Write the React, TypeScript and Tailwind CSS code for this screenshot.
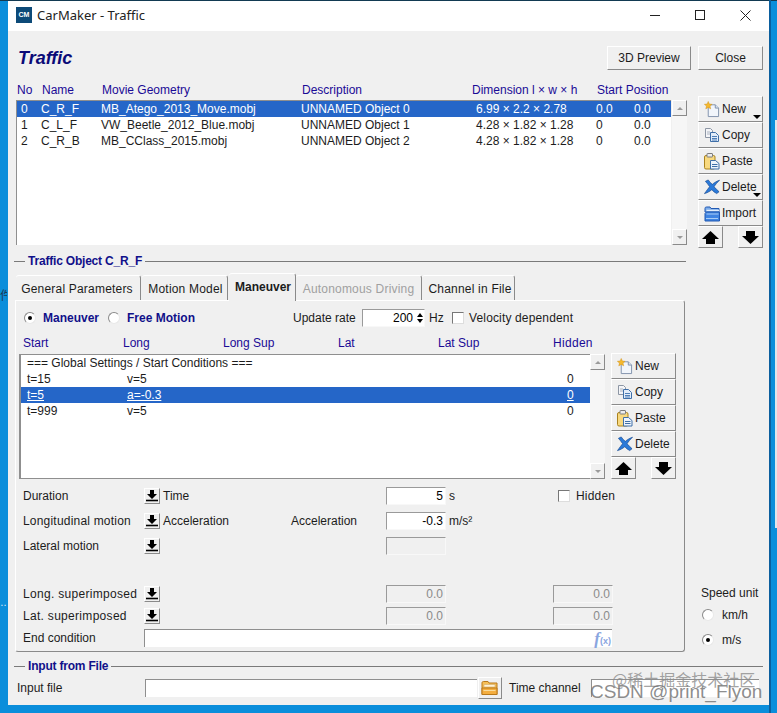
import React from "react";

const raised = "border border-t-white border-l-white border-r-[#8a8a8a] border-b-[#8a8a8a] bg-[#f0f0f0]";
const sunken = "border border-t-[#9a9a9a] border-l-[#9a9a9a] border-r-[#f8f8f8] border-b-[#f8f8f8]";

// toolbar icons
function NewIcon() {
  return (
    <svg width="17" height="17" viewBox="0 0 17 17">
      <path d="M4.500 3.500h7.500l3.500 3.500v9h-11z" fill="#f1f5fb" stroke="#7f90ab" />
      <path d="M12 3.500V7h3.500" fill="#d5e1f1" stroke="#7f90ab" />
      <path d="M4.500 0l1.200 2.700 2.900.3-2.200 1.900.7 2.900-2.600-1.500-2.600 1.500.7-2.900L.4 3l2.900-.3z" fill="#f5b92e" stroke="#d08f17" strokeWidth=".5" />
    </svg>
  );
}

function CopyIcon() {
  return (
    <svg width="16" height="16" viewBox="0 0 16 16">
      <path d="M1.500 1.500h5l2 2v7h-7z" fill="#f4f5f8" stroke="#8d96a4" />
      <path d="M3 5h3M3 7h3" stroke="#aab2bf" />
      <path d="M6.500 5.500h5l3 3v6h-8z" fill="#e3edf9" stroke="#3f6fa8" />
      <path d="M8 9.500h5M8 11.500h5M8 13h5" stroke="#4f7fb8" />
    </svg>
  );
}

function PasteIcon() {
  return (
    <svg width="16" height="17" viewBox="0 0 16 17">
      <rect x=".5" y="2.500" width="10.500" height="13.500" rx="1.500" fill="#f8d97f" stroke="#a9821f" />
      <rect x="3" y=".5" width="5.500" height="3.500" rx=".5" fill="#ececec" stroke="#7c7c7c" />
      <path d="M6.500 7.500h5l3.500 3v5.500H6.500z" fill="#eef4fb" stroke="#3f6fa8" />
      <path d="M8 11.500h5.500M8 13.500h5.500" stroke="#3f6fa8" />
    </svg>
  );
}

function DeleteIcon() {
  return (
    <svg width="17" height="16" viewBox="0 0 17 16">
      <path d="M.5 15C3 11.500 4.500 9.500 6 7.700 4.500 5.500 3 3.500 1.500 2l3-1.500c1.200 1.800 2.800 3.400 4.300 4.700C10.800 3.500 13.500 1.800 16.500.8c-2.500 2.400-4.500 4.800-5.800 7 1.800 2 3.500 3.600 5.300 5.200l-2.500 2c-2-1-3.800-2.500-5.200-4.100C6 12.700 3.500 14.200.5 15z" fill="#2b7ad9" stroke="#15488f" strokeWidth=".7" />
    </svg>
  );
}

function FolderIcon() {
  return (
    <svg width="16" height="17" viewBox="0 0 16 17">
      <path d="M1 3.500C1 2.500 1.500 2 2.500 2h3.500l1 1.500h8V7H1z" fill="#7eadea" stroke="#2058b2" />
      <path d="M2.500 5.500h12.500" stroke="#e3eefb" strokeWidth="1.500" />
      <path d="M1 16V8.500l1.500-1.500h13v9z" fill="#3f84e2" stroke="#2058b2" />
      <path d="M2.500 9h12M2 13.500h12" stroke="#a9ccf5" />
    </svg>
  );
}

function OpenFolderIcon() {
  return (
    <svg width="18" height="16" viewBox="0 0 18 16">
      <path d="M1 3c0-1 .5-1.500 1.500-1.500h4.500l1 1.500H16v11.500H1z" fill="#f6bf57" stroke="#b9791b" />
      <path d="M3 4.500h11v2.500H3z" fill="#fff2d4" stroke="#c9a365" strokeWidth=".5" />
      <path d="M1 14.500V8h15v6.500z" fill="#f4ae40" stroke="#b9791b" />
      <path d="M2.500 10.500h12" stroke="#f9dc9d" />
    </svg>
  );
}

function ArrowUp() {
  return (
    <svg width="17" height="13" viewBox="0 0 17 13">
      <path d="M8.500 0L17 8h-4v5H4V8H0z" fill="#000" />
    </svg>
  );
}

function ArrowDown() {
  return (
    <svg width="17" height="13" viewBox="0 0 17 13">
      <path d="M4 0h9v5h4l-8.500 8L0 5h4z" fill="#000" />
    </svg>
  );
}

function DropButton() {
  return (
    <div className={`w-[16px] h-[16px] flex items-center justify-center ${raised}`}>
      <svg width="12" height="12" viewBox="0 0 12 12">
        <path d="M4 0h4v4h3L6 9 1 4h3z" fill="#000" />
        <path d="M0 10.500h12" stroke="#000" strokeWidth="1.600" />
      </svg>
    </div>
  );
}

function SideButton({ icon, label, caret }: { icon: React.ReactNode; label: string; caret?: boolean }) {
  return (
    <div className={`relative w-[65px] h-[26px] flex items-center gap-[2px] pl-[5px] ${raised}`}>
      <div className="w-[16px] flex justify-center">{icon}</div>
      <span className="text-[12px] text-[#1c1c1c]">{label}</span>
      {caret && <div className="absolute right-[1px] bottom-[2px] w-0 h-0 border-x-[4px] border-x-transparent border-t-[4px] border-t-black" />}
    </div>
  );
}

function ButtonColumn({ showImport }: { showImport?: boolean }) {
  return (
    <div className="flex flex-col w-[65px]">
      <SideButton icon={<NewIcon />} label="New" caret={showImport} />
      <SideButton icon={<CopyIcon />} label="Copy" />
      <SideButton icon={<PasteIcon />} label="Paste" />
      <SideButton icon={<DeleteIcon />} label="Delete" caret={showImport} />
      {showImport && <SideButton icon={<FolderIcon />} label="Import" />}
      <div className="flex justify-between">
        <div className={`w-[25px] h-[22px] flex items-center justify-center ${raised}`}><ArrowUp /></div>
        <div className={`w-[25px] h-[22px] flex items-center justify-center ${raised}`}><ArrowDown /></div>
      </div>
    </div>
  );
}

function ScrollBar() {
  return (
    <div className="w-[15px] h-full flex flex-col justify-between bg-[#f6f6f6]">
      <div className={`h-[16px] flex items-center justify-center ${raised}`}>
        <div className="w-0 h-0 border-x-[3px] border-x-transparent border-b-[3px] border-b-[#9a9a9a]" />
      </div>
      <div className={`h-[16px] flex items-center justify-center ${raised}`}>
        <div className="w-0 h-0 border-x-[3px] border-x-transparent border-t-[3px] border-t-[#9a9a9a]" />
      </div>
    </div>
  );
}

function Radio({ on }: { on?: boolean }) {
  return (
    <div className="w-[12px] h-[12px] rounded-full bg-white border border-t-[#8a8a8a] border-l-[#8a8a8a] border-r-[#e8e8e8] border-b-[#e8e8e8] flex items-center justify-center">
      {on && <div className="w-[4px] h-[4px] rounded-full bg-black" />}
    </div>
  );
}

function Check() {
  return <div className="w-[12px] h-[12px] bg-white border border-t-[#777] border-l-[#777] border-r-[#ddd] border-b-[#ddd]" />;
}

function SectionTitle({ title, className }: { title: string; className: string }) {
  return (
    <div className={`${className} flex items-center h-[16px] pl-[6px] shrink-0`}>
      <div className="w-[11px] h-px bg-[#7a7a7a]" />
      <span className="px-[3px] text-[12px] font-bold tracking-[-0.2px] text-[#10108a]">{title}</span>
      <div className="flex-1 h-px bg-[#7a7a7a]" />
    </div>
  );
}

function Tab({ label, className, active, disabled }: { label: string; className: string; active?: boolean; disabled?: boolean }) {
  return (
    <div className={`${className} flex justify-center rounded-t-[3px] border-r border-r-[#8a8a8a] border-t border-t-white ${active ? "h-[28px] pt-[6px] font-bold relative z-10 -mb-px" : "h-[25px] pt-[6px] tracking-[0.2px]"} ${disabled ? "text-[#a0a0a0]" : "text-[#1c1c1c]"} text-[12px] bg-[#f0f0f0]`}>
      {label}
    </div>
  );
}

function Field({ value, disabled, className }: { value?: string; disabled?: boolean; className: string }) {
  return (
    <div className={`${className} h-[18px] flex items-center justify-end pr-[2px] text-[12px] ${sunken} ${disabled ? "bg-[#f0f0f0] text-[#8a8a8a]" : "bg-white text-black"}`}>
      {value}
    </div>
  );
}

const objects = [
  { no: "0", name: "C_R_F", movie: "MB_Atego_2013_Move.mobj", desc: "UNNAMED Object 0", dim: "6.99 × 2.2 × 2.78", s: "0.0", p: "0.0" },
  { no: "1", name: "C_L_F", movie: "VW_Beetle_2012_Blue.mobj", desc: "UNNAMED Object 1", dim: "4.28 × 1.82 × 1.28", s: "0", p: "0.0" },
  { no: "2", name: "C_R_B", movie: "MB_CClass_2015.mobj", desc: "UNNAMED Object 2", dim: "4.28 × 1.82 × 1.28", s: "0", p: "0.0" },
];

const maneuvers = [
  { start: "=== Global Settings / Start Conditions ===", long: "", hidden: "" },
  { start: "t=15", long: "v=5", hidden: "0" },
  { start: "t=5", long: "a=-0.3", hidden: "0", selected: true },
  { start: "t=999", long: "v=5", hidden: "0" },
];

export default function App() {
  return (
    <div className="relative w-[777px] h-[713px] overflow-hidden bg-[#0b8edb] font-['Liberation_Sans',sans-serif] text-[12px] text-[#1c1c1c] leading-[14px]">
      <div className="h-px bg-[#123a52]" />
      <span className="absolute left-0 top-[288px] w-[7px] overflow-hidden text-[12px] text-[#1b3a55] font-['Noto_Sans_CJK_SC',sans-serif]">件</span>
      <span className="absolute left-0 top-[596px] w-[7px] overflow-hidden text-[10px] text-[#e8f2fa]">…</span>
      <div className="absolute left-[769px] top-0 w-[2px] h-[713px] bg-[#0b5f9e]" />
      <div className="absolute left-[775px] top-[120px] w-[2px] h-[408px] bg-[#dfe6ec]" />

      <div className="ml-[8px] w-[761px] h-[704px] bg-[#f0f0f0] flex flex-col">
        {/* title bar */}
        <div className="h-[30px] shrink-0 bg-white flex items-center pl-[8px] pb-[2px]">
          <div className="w-[16px] h-[16px] bg-[#0d4a78] flex items-center justify-center text-[7px] font-bold text-white">CM</div>
          <span className="ml-[5px] text-[13px] text-[#222] font-['Noto_Sans',sans-serif]">CarMaker - Traffic</span>
          <div className="ml-auto flex items-center">
            <svg width="10" height="10" viewBox="0 0 10 10" className="mr-[35px]"><path d="M0 5.500h10" stroke="#222" /></svg>
            <svg width="10" height="10" viewBox="0 0 10 10" className="mr-[35px]"><rect x=".5" y=".5" width="9" height="9" fill="none" stroke="#222" /></svg>
            <svg width="11" height="11" viewBox="0 0 11 11" className="mr-[18px]"><path d="M.5.500l10 10M10.500.500l-10 10" stroke="#222" /></svg>
          </div>
        </div>

        {/* heading */}
        <div className="h-[51px] shrink-0 flex pl-[10px] pr-[6px] pt-[15px]">
          <h1 className="text-[18px] leading-[24px] font-bold italic text-[#0a0a78]">Traffic</h1>
          <div className={`ml-auto w-[84px] h-[24px] flex items-center justify-center ${raised}`}>3D Preview</div>
          <div className={`ml-[7px] w-[65px] h-[24px] flex items-center justify-center ${raised}`}>Close</div>
        </div>

        {/* object table */}
        <div className="flex pl-[8px] h-[170px] shrink-0">
          <div className="w-[671px] flex flex-col">
            <div className="relative h-[18px] shrink-0 text-[#1a0a96]">
              <div className="grid grid-cols-[25px_60px_200px_170px_125px_1fr] pl-[1px] pt-[1px]">
                <span>No</span><span>Name</span><span>Movie Geometry</span><span>Description</span><span>Dimension l × w × h</span><span>Start Position</span>
              </div>
            </div>
            <div className="h-[145px] flex">
              <div className="w-[655px] mr-px bg-white border-t border-l border-t-[#8f8f8f] border-l-[#8f8f8f]">
                {objects.map((o, i) => (
                  <div key={o.no} className={`grid grid-cols-[24px_60px_200px_175px_120px_38px_1fr] h-[16px] items-center ${i === 0 ? "bg-[#2566c8] text-white" : "text-[#1c1c1c]"}`}>
                    <span className="pl-[4px]">{o.no}</span><span>{o.name}</span><span>{o.movie}</span><span>{o.desc}</span><span>{o.dim}</span><span>{o.s}</span><span>{o.p}</span>
                  </div>
                ))}
              </div>
              <ScrollBar />
            </div>
          </div>
          <div className="ml-[11px] mt-[14px]">
            <ButtonColumn showImport />
          </div>
        </div>

        {/* traffic object */}
        <SectionTitle title="Traffic Object C_R_F" className="mt-px pr-[83px]" />

        <div className="flex pl-[7px] mt-[4px] shrink-0">
          <div className="w-[670px] flex flex-col shrink-0">
            <div className="flex items-end pl-[1px] h-[27px] shrink-0">
              <Tab label="General Parameters" className="w-[125px] pr-[2px]" />
              <div className="w-px" />
              <Tab label="Motion Model" className="w-[86px] pl-[2px]" />
              <div className="w-px" />
              <Tab label="Maneuver" className="w-[67px] pl-[2px]" active />
              <Tab label="Autonomous Driving" className="w-[126px]" disabled />
              <Tab label="Channel in File" className="w-[93px] pl-[4px]" />
            </div>

            <div className="h-[352px] shrink-0 border-r border-b border-r-[#8a8a8a] border-b-[#8a8a8a] rounded-br-[3px] rounded-bl-[3px] rounded-tr-[3px] border-t border-t-white border-l border-l-white flex flex-col pl-[7px] pt-[9px]">
              {/* mode row */}
              <div className="flex items-center h-[16px] shrink-0">
                <div className="ml-[1px]"><Radio on /></div>
                <span className="ml-[7px] w-[65px] font-bold text-[#10108a]">Maneuver</span>
                <Radio />
                <span className="ml-[7px] w-[166px] font-bold text-[#10108a]">Free Motion</span>
                <span className="w-[69px]">Update rate</span>
                <div className={`w-[63px] h-[18px] flex items-center justify-end bg-white text-black ${sunken}`}>
                  200
                  <div className="ml-[2px] w-[9px] flex flex-col items-center gap-[2px]">
                    <div className="w-0 h-0 border-x-[3px] border-x-transparent border-b-[4px] border-b-black" />
                    <div className="w-0 h-0 border-x-[3px] border-x-transparent border-t-[4px] border-t-black" />
                  </div>
                </div>
                <span className="ml-[4px] w-[23px]">Hz</span>
                <Check />
                <span className="ml-[5px] tracking-[0.15px]">Velocity dependent</span>
              </div>

              {/* maneuver list */}
              <div className="h-[18px] mt-[10px] shrink-0 grid grid-cols-[100px_100px_115px_100px_115px_1fr] text-[#1a0a96]">
                <span>Start</span><span>Long</span><span>Long Sup</span><span>Lat</span><span>Lat Sup</span><span className="tracking-[0.3px]">Hidden</span>
              </div>
              <div className="flex -ml-[4px] h-[125px] shrink-0">
                <div className="w-[571px] bg-white border-t border-l-2 border-b border-t-[#8f8f8f] border-l-[#8f8f8f] border-b-[#8f8f8f]">
                  {maneuvers.map((m, i) => (
                    <div key={i} className={`relative h-[16px] flex items-center pl-[6px] ${m.selected ? "bg-[#2566c8] text-white" : "text-[#1c1c1c]"}`}>
                      <span className={`${i === 0 ? "w-[300px]" : "w-[100px]"} ${m.selected ? "underline" : ""}`}>{m.start}</span>
                      <span className={m.selected ? "underline" : ""}>{m.long}</span>
                      <span className={`absolute left-[546px] ${m.selected ? "underline" : ""}`}>{m.hidden}</span>
                    </div>
                  ))}
                </div>
                <ScrollBar />
                <div className="ml-[6px] -mt-px"><ButtonColumn /></div>
              </div>

              {/* parameter rows */}
              <div className="flex flex-col mt-[8px] shrink-0">
                <div className="flex items-center h-[18px]">
                  <span className="w-[121px]">Duration</span><DropButton />
                  <span className="ml-[3px] w-[223px]">Time</span>
                  <Field value="5" className="w-[60px]" />
                  <span className="ml-[3px] w-[109px]">s</span>
                  <Check /><span className="ml-[6px] tracking-[0.2px]">Hidden</span>
                </div>
                <div className="flex items-center h-[18px] mt-[7px]">
                  <span className="w-[121px] tracking-[0.2px]">Longitudinal motion</span><DropButton />
                  <span className="ml-[3px] w-[128px]">Acceleration</span>
                  <span className="w-[95px]">Acceleration</span>
                  <Field value="-0.3" className="w-[60px]" />
                  <span className="ml-[3px]">m/s²</span>
                </div>
                <div className="flex items-center h-[18px] mt-[7px]">
                  <span className="w-[121px]">Lateral motion</span><DropButton />
                  <div className="w-[226px]" />
                  <Field disabled className="w-[60px]" />
                </div>
                <div className="flex items-center h-[18px] mt-[30px]">
                  <span className="w-[121px] tracking-[0.3px]">Long. superimposed</span><DropButton />
                  <div className="w-[226px]" />
                  <Field value="0.0" disabled className="w-[60px]" />
                  <div className="w-[107px]" />
                  <Field value="0.0" disabled className="w-[60px]" />
                </div>
                <div className="flex items-center h-[18px] mt-[4px]">
                  <span className="w-[121px] tracking-[0.3px]">Lat. superimposed</span><DropButton />
                  <div className="w-[226px]" />
                  <Field value="0.0" disabled className="w-[60px]" />
                  <div className="w-[107px]" />
                  <Field value="0.0" disabled className="w-[60px]" />
                </div>
                <div className="flex items-center h-[18px] mt-[4px]">
                  <span className="w-[121px]">End condition</span>
                  <div className="relative w-[468px] h-[18px] bg-white border-t border-l border-t-[#8f8f8f] border-l-[#8f8f8f]">
                    <span className="absolute right-[1px] top-0 leading-[17px] font-['Liberation_Serif',serif] italic font-bold text-[17px] text-[#8aa6df]">f<span className="not-italic text-[9px] font-['Liberation_Sans',sans-serif]">(x)</span></span>
                  </div>
                </div>
              </div>
            </div>
          </div>

          {/* speed unit */}
          <div className="ml-[16px] mt-[313px] flex flex-col">
            <span className="h-[14px]">Speed unit</span>
            <div className="flex items-center h-[14px] mt-[8px] pl-px"><Radio /><span className="ml-[8px]">km/h</span></div>
            <div className="flex items-center h-[14px] mt-[11px] pl-px"><Radio on /><span className="ml-[8px]">m/s</span></div>
          </div>
        </div>

        {/* input from file */}
        <SectionTitle title="Input from File" className="mt-[6px] pr-[6px]" />
        <div className="flex items-center pl-[9px] h-[22px] mt-[3px] shrink-0">
          <span className="w-[128px]">Input file</span>
          <div className="w-[332px] h-[18px] bg-white border-t border-l border-t-[#8f8f8f] border-l-[#8f8f8f]" />
          <div className={`ml-[1px] w-[24px] h-[22px] flex items-center justify-center ${raised}`}><OpenFolderIcon /></div>
          <span className="ml-[7px] w-[82px]">Time channel</span>
          <div className="w-[168px] h-[18px] bg-white border-t border-l border-t-[#8f8f8f] border-l-[#8f8f8f]" />
        </div>
      </div>

      {/* watermarks */}
      <span className="absolute left-[612px] top-[672px] text-[16px] text-[#8c8c8c]/80 font-['Noto_Sans_CJK_SC',sans-serif]">@稀土掘金技术社区</span>
      <span className="absolute left-[590px] top-[679px] text-[19px] leading-[26px] text-[#6f6f6f]/80 font-['Liberation_Sans',sans-serif]">CSDN @print_Flyon</span>
    </div>
  );
}
